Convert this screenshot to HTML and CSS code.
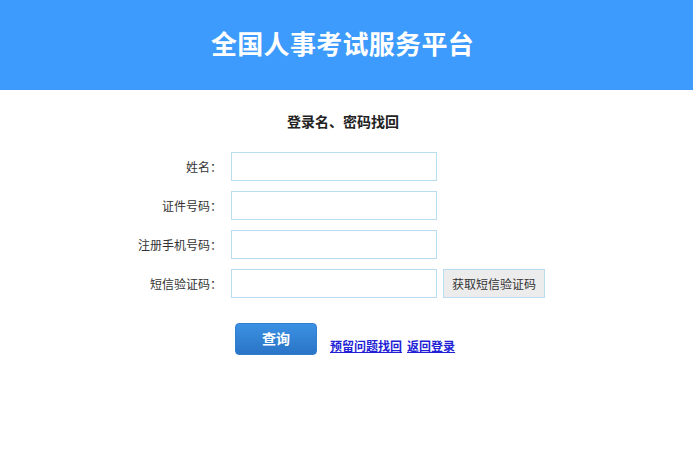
FILE: index.html
```html
<!DOCTYPE html>
<html lang="zh-CN">
<head>
  <meta charset="UTF-8" />
  <title>全国人事考试服务平台</title>
  <link rel="stylesheet" href="styles.css">
</head>
<body>
  <div class="header">全国人事考试服务平台</div>
  <div class="main">
    <h2 class="title">登录名、密码找回</h2>
    <form class="form" onsubmit="return false;">
      <label class="lbl">姓名：</label>
      <input class="ipt" type="text" />
      <span></span>

      <label class="lbl">证件号码：</label>
      <input class="ipt" type="text" />
      <span></span>

      <label class="lbl">注册手机号码：</label>
      <input class="ipt" type="text" />
      <span></span>

      <label class="lbl">短信验证码：</label>
      <input class="ipt" type="text" />
      <button type="button" class="btn-code">获取短信验证码</button>
    </form>
    <div class="actions">
      <button type="button" class="btn-query">查询</button>
      <a href="#" class="link">预留问题找回</a>
      <a href="#" class="link">返回登录</a>
    </div>
  </div>
</body>
</html>
```

FILE: styles.css
```css
body {
  margin: 0;
  background: #fff;
  font-family: "Noto Sans CJK SC", "Liberation Sans", sans-serif;
  color: #333;
  font-size: 12px;
}
.header {
  height: 90px;
  line-height: 86px;
  background: #3d9bfd;
  color: #fff;
  font-size: 26px;
  font-weight: bold;
  text-align: center;
  letter-spacing: 0.3px;
  padding-right: 8px;
}
.title {
  margin: 20px 0 0;
  height: 22px;
  line-height: 22px;
  font-size: 14px;
  font-weight: bold;
  color: #222;
  text-align: center;
  padding-right: 7px;
}
.form {
  display: grid;
  grid-template-columns: 222px 206px auto;
  column-gap: 9px;
  row-gap: 10px;
  align-items: center;
  margin-top: 20px;
}
.lbl {
  text-align: right;
  color: #333;
}
.ipt {
  box-sizing: border-box;
  height: 29px;
  width: 206px;
  border: 1px solid #b9dcee;
  padding: 0 6px;
  margin: 0;
  outline: none;
}
.btn-code {
  justify-self: start;
  margin-left: -3px;
  box-sizing: border-box;
  height: 29px;
  width: 102px;
  border: 1px solid #b9dcee;
  background: #ececec;
  color: #333;
  font-family: inherit;
  font-size: 12px;
  padding: 0;
  cursor: pointer;
}
.actions {
  display: flex;
  align-items: flex-end;
  margin: 25px 0 0 235px;
}
.btn-query {
  width: 82px;
  height: 32px;
  border: 1px solid #2f7fd0;
  border-radius: 4px;
  background: linear-gradient(#3b91e3, #2a74c6);
  color: #fff;
  font-family: inherit;
  font-size: 14px;
  font-weight: bold;
  padding: 0 0 3px;
  cursor: pointer;
  margin-right: 13px;
}
.link {
  color: #1f1fd6;
  font-weight: bold;
  font-size: 12px;
  line-height: 14px;
  margin-right: 5px;
  margin-bottom: 2px;
}
```
